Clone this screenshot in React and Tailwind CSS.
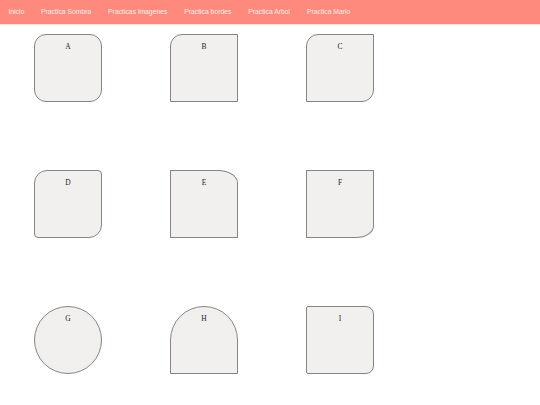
import React from 'react'

const links = ['Inicio', 'Practica Sombra', 'Practicas imagenes', 'Practica bordes', 'Practica Arbol', 'Practica Mario']

const boxes = [
    { label: 'A', shape: 'rounded-[12px]' },
    { label: 'B', shape: 'rounded-tl-[12px]' },
    { label: 'C', shape: 'rounded-tl-[12px] rounded-br-[12px]' },
    { label: 'D', shape: 'rounded-tl-[13px] rounded-tr-[4px] rounded-br-[13px] rounded-bl-[4px]' },
    { label: 'E', shape: 'rounded-tr-[20px_13px]' },
    { label: 'F', shape: 'rounded-br-[18px_12px]' },
    { label: 'G', shape: 'rounded-full' },
    { label: 'H', shape: 'rounded-t-[34px]' },
    { label: 'I', shape: 'rounded-tl-[2px] rounded-tr-[8px] rounded-br-[8px] rounded-bl-[2px]' },
]

function App () {
    return (
        <div className="min-h-[405px] w-[540px] bg-white">
            <nav className="h-[25px] flex items-center bg-[#fd8a7c] border-b border-[#fde3dd] font-['Liberation_Sans',Arial,sans-serif]">
                {links.map((link) => (
                    <a key={link} className="px-[8.4px] text-[6.8px] leading-[8px] text-white/85">
                        {link}
                    </a>
                ))}
            </nav>

            <div className="grid grid-cols-[repeat(3,68px)] gap-x-[68px] gap-y-[68px] pl-[34px] pt-[9px]">
                {boxes.map((box) => (
                    <div
                        key={box.label}
                        className={`w-[68px] h-[68px] bg-[#f1f0ef] border border-[#858585] ${box.shape}`}
                    >
                        <p className="pt-[7.5px] text-center text-[7.5px] leading-[8px] text-[#222] font-['Liberation_Serif','Times_New_Roman',serif]">
                            {box.label}
                        </p>
                    </div>
                ))}
            </div>
        </div>
    )
}

export default App
